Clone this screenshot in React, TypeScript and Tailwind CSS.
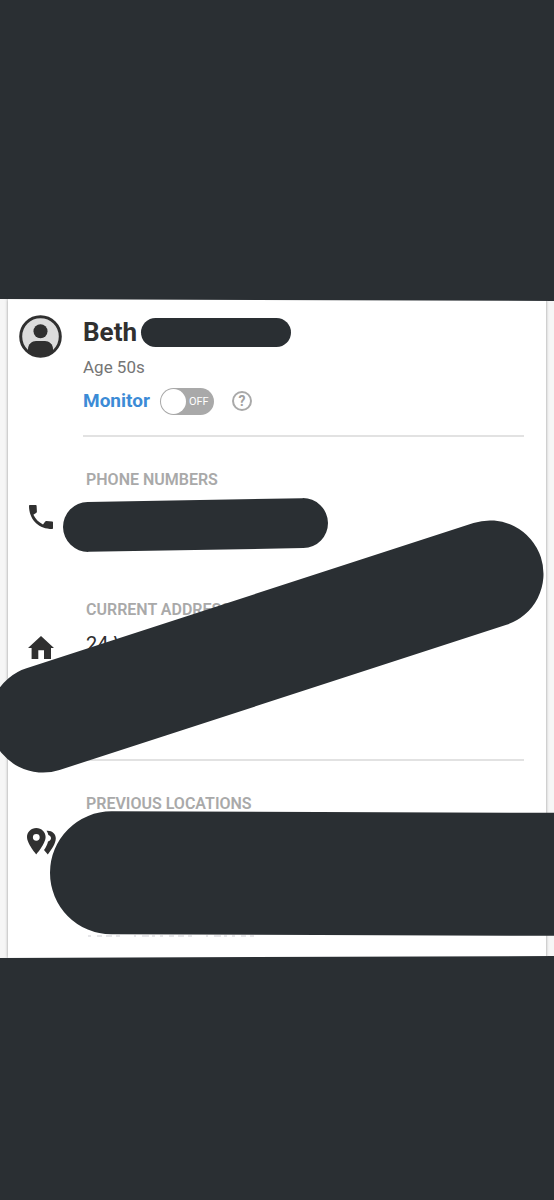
import React from 'react';

const PersonIcon = () => (
  <svg viewBox="0 0 43 43" className="size-[43px]" aria-hidden="true">
    <defs>
      <clipPath id="avatar-clip">
        <circle cx="21.5" cy="21.5" r="20" />
      </clipPath>
    </defs>
    <circle cx="21.5" cy="21.5" r="19.8" fill="#dcdcdc" />
    <g clipPath="url(#avatar-clip)" fill="#303030">
      <circle cx="21.5" cy="16.3" r="7" />
      <path d="M9 43v-9c0-5 4-8 8-8h9c4 0 8 3 8 8v9z" />
    </g>
    <circle cx="21.5" cy="21.5" r="19.8" fill="none" stroke="#303030" strokeWidth="3" />
  </svg>
);

const PhoneIcon = () => (
  <svg viewBox="0 0 24 24" className="size-6" fill="#303030" aria-hidden="true">
    <path d="M.8 0h6q.8 0 .8.800l.3 5.800q0 .7-.5 1.200L4.400 9.800C6.600 14.200 9.600 17.200 14 19.400l2.200-2.900q.5-.5 1.200-.4l5.800.4q.8.100.8.800v5.900q0 .8-.8.8C9.500 24 0 14.500 0 .8Q0 0 .8 0z" />
  </svg>
);

const HomeIcon = () => (
  <svg viewBox="0 0 26 23" className="h-[23px] w-[26px]" fill="#303030" aria-hidden="true">
    <path d="M13 0 26 12H23V23H16V14.200H10.300V23H3.600V12H0z" />
  </svg>
);

const PinsIcon = () => (
  <svg viewBox="0 0 29 27" className="h-[27px] w-[29px]" fill="#303030" aria-hidden="true">
    <path
      fillRule="evenodd"
      d="M9.300 0C4.100 0 0 4 0 9.100 0 15.800 9.300 26.500 9.300 26.500S18.600 15.800 18.600 9.100C18.600 4 14.500 0 9.300 0zm0 12.700a3.400 3.400 0 1 1 0-6.800 3.400 3.400 0 0 1 0 6.800z"
    />
    <path d="M19.500 2.700c5.200-.6 9.300 2.900 9.300 7.500 0 5.300-4.200 11.200-8 16.300l-3.800-4.400c2-2.700 3.400-5.700 4-8.500 1.700-.6 3-1.800 3-3.400 0-1.500-1.200-2.600-2.600-3.100-.4-1.700-.9-3.200-1.900-4.400z" />
  </svg>
);

interface SectionProps {
  title: string;
  icon: React.ReactNode;
  className: string;
  children?: React.ReactNode;
}

const Section: React.FC<SectionProps> = ({ title, icon, className, children }) => (
  <section className={`relative grid grid-cols-[66px_1fr] content-start gap-x-[9px] pt-[33px] pr-[22px] ${className}`}>
    <h2 className="col-start-2 pl-[3px] text-[16px] leading-5 font-semibold text-[#a9a9a9]">{title}</h2>
    <div className="col-start-1 flex h-[54px] items-center justify-center">{icon}</div>
    {children}
  </section>
);

const App: React.FC = () => {
  return (
    <div className="flex min-h-screen flex-col overflow-hidden bg-[#f6f6f6] font-['Roboto',sans-serif] text-[#303030]">
      <div className="relative z-20 -mb-0.5 h-[301px] shrink-0 bg-[#2a2f33] [clip-path:polygon(0_0,100%_0,100%_100%,0_calc(100%-2px))]" />

      <main className="mx-2 bg-white shadow-[0_0_3px_rgba(0,0,0,0.4)]">
        <header className="grid grid-cols-[64px_1fr] gap-x-[11px] pt-4 pr-[22px]">
          <div className="flex justify-center">
            <PersonIcon />
          </div>
          <div className="border-b-2 border-[#e2e2e2] pt-px pb-5">
            <div className="flex items-center gap-1">
              <h1 className="text-[26px] leading-8 font-bold">Beth</h1>
              <div className="h-[29px] w-[150px] rounded-full bg-[#2a2f33]" />
            </div>
            <p className="mt-[7px] text-[17px] leading-6 text-[#757575]">Age 50s</p>
            <div className="mt-2 flex h-7 items-center">
              <label htmlFor="monitor" className="text-[19px] font-bold text-[#3c8bd6]">
                Monitor
              </label>
              <label className="ml-2.5 flex h-[27px] w-[54px] items-center rounded-full bg-[#a9a9a9] pl-px">
                <input id="monitor" type="checkbox" className="size-[25px] appearance-none rounded-full bg-white" />
                <span className="ml-[3px] pt-0.5 text-[11px] text-white">OFF</span>
              </label>
              <button
                type="button"
                aria-label="About monitoring"
                className="ml-[18px] flex size-5 items-center justify-center rounded-full border-2 border-[#a9a9a9] text-[14px] leading-4 font-bold text-[#a0a0a0]"
              >
                ?
              </button>
            </div>
          </div>
        </header>

        <Section title="PHONE NUMBERS" icon={<PhoneIcon />} className="min-h-[130px]">
          <div className="absolute top-[63px] left-[55px] h-[50px] w-[265px] -rotate-1 rounded-full bg-[#2a2f33]" />
        </Section>

        <Section title="CURRENT ADDRESS" icon={<HomeIcon />} className="min-h-[192px]">
          <p className="pt-3 pl-[3px] text-[20px] leading-6">24 \</p>
          <div className="absolute top-[26px] -left-[30px] z-10 h-[107px] w-[577px] -rotate-18 rounded-full bg-[#2a2f33]" />
        </Section>
        <hr className="mr-[22px] ml-[75px] border-t-2 border-[#e2e2e2]" />

        <Section title="PREVIOUS LOCATIONS" icon={<PinsIcon />} className="min-h-[197px]">
          {/* lower edge of the covered line */}
          <svg viewBox="0 0 166 4" className="absolute top-[173px] left-20 h-1 w-[166px]" fill="none" stroke="#e6e6e9" strokeWidth="2" aria-hidden="true">
            <path d="M0 2h166" strokeDasharray="3 6 5 4 6 4 4 14 2 6 7 3 3 5" />
          </svg>
          <div className="absolute top-[51px] -right-7 left-[42px] h-[123px] rotate-[0.2deg] rounded-l-full bg-[#2a2f33]" />
        </Section>
      </main>

      <div className="relative z-20 -mt-0.5 min-h-[100px] flex-1 bg-[#2a2f33] [clip-path:polygon(0_2px,100%_0,100%_100%,0_100%)]" />
    </div>
  );
};

export default App;
